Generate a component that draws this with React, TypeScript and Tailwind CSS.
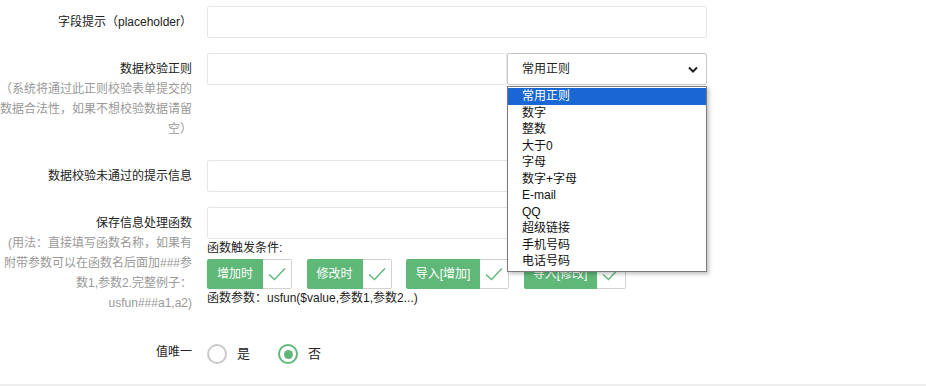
import React from "react";

const FONT = "font-['Liberation_Sans','Noto_Sans_CJK_SC',sans-serif]";

const OPTIONS = [
  "常用正则",
  "数字",
  "整数",
  "大于0",
  "字母",
  "数字+字母",
  "E-mail",
  "QQ",
  "超级链接",
  "手机号码",
  "电话号码",
];

const TRIGGERS = [
  { label: "增加时", width: "w-[56px]" },
  { label: "修改时", width: "w-[56px]" },
  { label: "导入[增加]", width: "w-[74px]" },
  { label: "导入[修改]", width: "w-[73px]" },
];

const Label = ({ title, hint }: { title: string; hint?: string }) => (
  <div className="w-[207px] shrink-0 py-[6px] pr-[15px] text-right text-[12px] leading-[20px]">
    <div className="text-[#222]">{title}</div>
    {hint && <div className="text-[#999]">{hint}</div>}
  </div>
);

const Input = ({ className = "" }: { className?: string }) => (
  <div className={`h-[32px] rounded-[2px] border border-[#e6e6e6] bg-white ${className}`} />
);

const Check = () => (
  <svg width="18" height="14" viewBox="0 0 18 14" fill="none">
    <path d="M1 7.5 L6.5 12.5 L17 1.5" stroke="#5FB878" strokeWidth="1.4" />
  </svg>
);

const TriggerBox = ({ label, width }: { label: string; width: string }) => (
  <div className="flex h-[30px]">
    <div
      className={`${width} flex items-center justify-center rounded-l-[2px] bg-[#5FB878] text-[12px] text-white`}
    >
      {label}
    </div>
    <div className="flex w-[29px] items-center justify-center rounded-r-[2px] border border-l-0 border-[#d2d2d2] bg-white">
      <Check />
    </div>
  </div>
);

const Radio = ({ label, checked }: { label: string; checked?: boolean }) => (
  <div className="flex items-center">
    <div
      className={`flex h-[20px] w-[20px] items-center justify-center rounded-full border-2 ${
        checked ? "border-[#5FB878]" : "border-[#c9c9c9]"
      }`}
    >
      {checked && <div className="h-[9px] w-[9px] rounded-full bg-[#5FB878]" />}
    </div>
    <span className="ml-[10px] text-[13px] text-[#222]">{label}</span>
  </div>
);

export default function App() {
  return (
    <div className={`relative h-[386px] w-[926px] overflow-hidden bg-white ${FONT}`}>
      <div className="pt-[6px]">
        {/* placeholder */}
        <div className="mb-[15px] flex">
          <Label title="字段提示（placeholder）" />
          <Input className="w-[500px]" />
        </div>

        {/* regex */}
        <div className="mb-[15px] flex">
          <Label
            title="数据校验正则"
            hint="（系统将通过此正则校验表单提交的数据合法性，如果不想校验数据请留空）"
          />
          <div className="flex h-[32px]">
            <Input className="w-[300px]" />
            <div className="relative">
              <div className="flex h-[32px] w-[200px] items-center justify-between rounded-[2px] border border-[#c8c8c8] bg-white pl-[14px] pr-[8px] text-[12px] text-[#222]">
                <span>常用正则</span>
                <svg width="10" height="7" viewBox="0 0 10 7" fill="none">
                  <path d="M1 1.5 L5 5.5 L9 1.5" stroke="#222" strokeWidth="2" />
                </svg>
              </div>
              <div className="absolute left-0 top-[33px] z-10 w-[200px] border border-[#7a7a7a] bg-white py-[1px] shadow-[2px_2px_4px_rgba(0,0,0,0.25)]">
                {OPTIONS.map((o, i) => (
                  <div
                    key={o}
                    className={`h-[16.5px] pl-[14px] text-[12px] leading-[17px] ${
                      i === 0 ? "bg-[#1967d2] text-white" : "text-[#111]"
                    }`}
                  >
                    {o}
                  </div>
                ))}
              </div>
            </div>
          </div>
        </div>

        {/* error message */}
        <div className="mb-[15px] flex">
          <Label title="数据校验未通过的提示信息" />
          <Input className="w-[500px]" />
        </div>

        {/* handler */}
        <div className="mb-[15px] flex">
          <Label
            title="保存信息处理函数"
            hint="(用法：直接填写函数名称，如果有附带参数可以在函数名后面加###参数1,参数2.完整例子：usfun###a1,a2)"
          />
          <div className="flex flex-col">
            <Input className="w-[500px]" />
            <div className="text-[12px] leading-[18px] text-[#222]">函数触发条件:</div>
            <div className="mt-[2px] flex gap-[14.5px]">
              {TRIGGERS.map((t) => (
                <TriggerBox key={t.label} label={t.label} width={t.width} />
              ))}
            </div>
            <div className="text-[12px] leading-[18px] text-[#222]">
              函数参数：usfun($value,参数1,参数2...)
            </div>
          </div>
        </div>

        {/* unique */}
        <div className="flex">
          <div className="w-[207px] shrink-0 py-[8px] pr-[15px] text-right text-[12px] leading-[20px] text-[#222]">
            值唯一
          </div>
          <div className="flex h-[36px] items-center gap-[28px] pt-[4px]">
            <Radio label="是" />
            <Radio label="否" checked />
          </div>
        </div>
      </div>

      <div className="absolute left-0 top-[384px] h-[2px] w-full bg-[#eeeeee]" />
    </div>
  );
}
